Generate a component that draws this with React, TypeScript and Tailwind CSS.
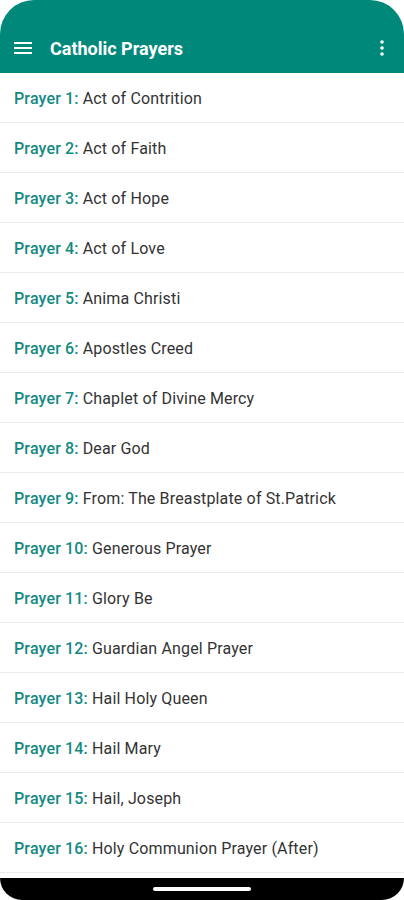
import React from "react";

const prayers = [
  "Act of Contrition",
  "Act of Faith",
  "Act of Hope",
  "Act of Love",
  "Anima Christi",
  "Apostles Creed",
  "Chaplet of Divine Mercy",
  "Dear God",
  "From: The Breastplate of St.Patrick",
  "Generous Prayer",
  "Glory Be",
  "Guardian Angel Prayer",
  "Hail Holy Queen",
  "Hail Mary",
  "Hail, Joseph",
  "Holy Communion Prayer (After)",
];

export default function App() {
  return (
    <div
      className="w-[404px] h-[900px] bg-white overflow-hidden flex flex-col"
      style={{ fontFamily: "Roboto, 'Noto Sans', sans-serif" }}
    >
      <header className="h-[73px] shrink-0 bg-[#00897b] rounded-t-[34px] flex items-end">
        <div className="h-[50px] w-full flex items-center pl-[14px] pr-[20px]">
          <svg width="18" height="14" viewBox="0 0 18 14" className="shrink-0">
            <rect x="0" y="1" width="18" height="2" fill="white" />
            <rect x="0" y="6" width="18" height="2" fill="white" />
            <rect x="0" y="11" width="18" height="2" fill="white" />
          </svg>
          <div className="ml-[18px] text-white text-[18px] font-bold flex-1 leading-none mt-[1px]">
            Catholic Prayers
          </div>
          <svg width="4" height="16" viewBox="0 0 4 16" className="shrink-0">
            <circle cx="2" cy="2" r="1.8" fill="white" />
            <circle cx="2" cy="8" r="1.8" fill="white" />
            <circle cx="2" cy="14" r="1.8" fill="white" />
          </svg>
        </div>
      </header>
      <ul className="flex flex-col">
        {prayers.map((p, i) => (
          <li
            key={i}
            className="h-[50px] flex items-center px-[14px] pt-[2px] border-b border-[#ececec] text-[16px] tracking-[0.15px] leading-none"
          >
            <span className="text-[#138a80] font-medium">Prayer {i + 1}:</span>
            <span className="text-[#333333] ml-[4px]">{p}</span>
          </li>
        ))}
      </ul>
      <div className="flex-1" />
      <div className="h-[22px] shrink-0 bg-black rounded-b-[28px] flex items-center justify-center">
        <div className="w-[98px] h-[4px] rounded-full bg-white" />
      </div>
    </div>
  );
}
